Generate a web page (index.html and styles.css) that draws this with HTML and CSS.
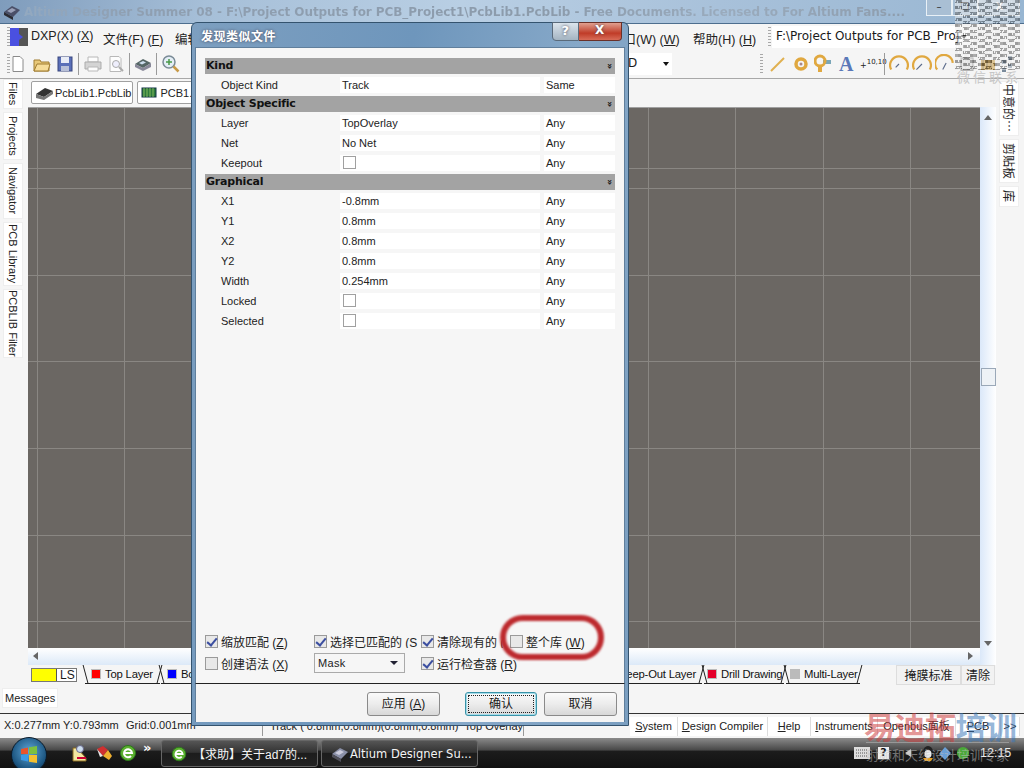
FILE: index.html
```html
<!DOCTYPE html>
<html lang="zh">
<head>
<meta charset="utf-8">
<title>Altium Designer</title>
<link rel="stylesheet" href="styles.css">
</head>
<body>
<div class="screen">
  <header class="titlebar">
    <svg class="app-icon" width="20" height="18" viewBox="0 0 20 18"><path d="M2 9 10 3l8 4-7 7z" fill="#4a4f68"/><path d="M2 9l9 5v3L2 12z" fill="#2b2b33"/><path d="M5 8l5-3 4 2-5 3z" fill="#9aa0b8"/></svg>
    <span class="title-text">Altium Designer Summer 08 - F:\Project Outputs for PCB_Project1\PcbLib1.PcbLib - Free Documents. Licensed to For Altium Fans....</span>
    <div class="win-controls"><span class="wc">&#8211;</span><span class="wc">&#10064;</span><span class="wc wc-x">X</span></div>
  </header>

  <nav class="menubar">
    <span class="grip"></span>
    <svg class="dxp" width="18" height="18" viewBox="0 0 18 18"><rect x="0" y="0" width="9" height="18" fill="#4a50e0"/><rect x="9" y="0" width="9" height="18" fill="#555"/><path d="M9 6l4 3-4 3z" fill="#4a50e0"/></svg>
    <span class="menu m-dxp">DXP(X) (<u>X</u>)</span>
    <span class="menu m-file">文件(F) (<u>F</u>)</span>
    <span class="menu m-edit">编辑</span>
    <span class="menu m-win">窗口(W) (<u>W</u>)</span>
    <span class="menu m-help">帮助(H) (<u>H</u>)</span>
    <span class="grip g-path"></span>
    <span class="path-box">F:\Project Outputs for PCB_Proj<i class="caret"></i></span>
  </nav>

  <div class="toolbar">
    <span class="grip g-tool"></span>
    <svg class="ti" width="16" height="18" viewBox="0 0 16 18"><path d="M3 1.500h7l3 3v12H3z" fill="#fff" stroke="#8a8a8a"/></svg>
    <svg class="ti t-open" width="20" height="18" viewBox="0 0 20 18"><path d="M2 5h6l1 2h8v9H2z" fill="#e8c878" stroke="#a07c30"/><path d="M2 16l3-7h13l-2 7z" fill="#f6dc98" stroke="#a07c30"/></svg>
    <svg class="ti" width="18" height="18" viewBox="0 0 18 18"><rect x="2" y="2" width="14" height="14" fill="#5a6fb8" stroke="#38467e"/><rect x="5" y="2" width="8" height="6" fill="#e8ecf6"/><rect x="5" y="11" width="8" height="5" fill="#b8c0d8"/></svg>
    <span class="sep"></span>
    <svg class="ti dim" width="20" height="18" viewBox="0 0 20 18"><path d="M5 2h10v5H5z" fill="#fff" stroke="#aaa"/><path d="M2 7h16v7H2z" fill="#ccc" stroke="#999"/><path d="M5 12h10v4H5z" fill="#fff" stroke="#aaa"/></svg>
    <svg class="ti dim" width="18" height="18" viewBox="0 0 18 18"><path d="M3 1.500h9l2 2v13H3z" fill="#fff" stroke="#aaa"/><circle cx="9" cy="9" r="3.500" fill="#eef" stroke="#999"/><path d="M12 12l4 4" stroke="#999" stroke-width="2"/></svg>
    <span class="sep"></span>
    <svg class="ti" width="18" height="18" viewBox="0 0 18 18"><path d="M1 9l8-5 8 4-8 5z" fill="#566"/><path d="M1 9v3l8 4 8-4V8l-8 5z" fill="#889"/><path d="M5 8l4-2 3 1.500-4 2z" fill="#cde"/></svg>
    <span class="sep"></span>
    <svg class="ti" width="20" height="20" viewBox="0 0 20 20"><circle cx="8" cy="8" r="6" fill="#e4eef6" stroke="#7a8a96" stroke-width="1.500"/><path d="M5 8h6M8 5v6" stroke="#4a9a4a" stroke-width="1.500"/><path d="M12.500 12.500l5 5" stroke="#c89a48" stroke-width="2.500"/></svg>
    <div class="tool-right">
      <span class="combo-d">D<i class="caret"></i></span>
      <span class="grip g-place"></span>
      <svg class="tr t-line" width="18" height="18" viewBox="0 0 18 18"><path d="M2 16 15 3" stroke="#e0b050" stroke-width="2"/></svg>
      <svg class="tr t-pad" width="16" height="18" viewBox="0 0 16 18"><circle cx="8" cy="9" r="5" fill="none" stroke="#e0a840" stroke-width="3.500"/><circle cx="8" cy="9" r="1.500" fill="#a88"/></svg>
      <svg class="tr t-via" width="18" height="20" viewBox="0 0 18 20"><path d="M9 10h8V6H9z" fill="#7aa6b8"/><circle cx="6" cy="7" r="5" fill="none" stroke="#e0a840" stroke-width="3"/><rect x="4" y="11" width="4" height="7" fill="#e0a840"/></svg>
      <span class="letter-a">A</span>
      <span class="coord">+<sup>10,10</sup></span>
      <span class="sep"></span>
      <svg class="tr arc" width="20" height="20" viewBox="1 1 18 18"><path d="M3 15A8 8 0 1 1 17 15" fill="none" stroke="#e0a840" stroke-width="2"/><path d="M7 13l3-3" stroke="#5a6a8a"/></svg>
      <svg class="tr arc" width="20" height="20" viewBox="1 1 18 18"><path d="M3 15A8 8 0 1 1 17 15" fill="none" stroke="#e0a840" stroke-width="2"/><path d="M5 15l5-5" stroke="#5a6a8a"/></svg>
      <svg class="tr arc" width="20" height="20" viewBox="1 1 18 18"><path d="M3 15A8 8 0 1 1 17 9" fill="none" stroke="#e0a840" stroke-width="2"/><path d="M8 15l3-6" stroke="#5a6a8a"/></svg>
      <svg class="tr arc" width="18" height="20" viewBox="0 0 18 20"><rect x="3" y="4" width="12" height="12" fill="#ddd" stroke="#777"/></svg>
      <svg class="tr arc" width="18" height="20" viewBox="0 0 18 20"><rect x="2" y="6" width="14" height="10" fill="#c89838"/><path d="M4 6v10M8 6v10M12 6v10" stroke="#6a5020"/></svg>
      <svg class="tr arc" width="14" height="20" viewBox="0 0 14 20"><path d="M2 6h4v4H2zM8 2h4v4H8zM8 10h4v4H8zM2 14h4v4H2z" fill="#7a8a9a"/></svg>
    </div>
  </div>

  <div class="doc-tabs">
    <span class="doc-tab">
      <svg width="20" height="16" viewBox="0 0 20 16"><path d="M1 9l9-6 8 3-9 6z" fill="#333"/><path d="M1 9v4l8 2 9-6V6l-9 6z" fill="#777"/></svg>PcbLib1.PcbLib</span>
    <span class="doc-tab">
      <svg width="19" height="14" viewBox="0 0 19 14"><rect x="1" y="2" width="14" height="9" fill="#2d7a3c" stroke="#134"/><path d="M3 2v9M6 2v9M9 2v9M12 2v9" stroke="#9c6" stroke-width=".8"/></svg>PCB1.PcbDoc</span>
  </div>

  <main class="workspace">
    <aside class="rail rail-left">
      <span class="rail-tab h-files">Files</span>
      <span class="rail-tab h-proj">Projects</span>
      <span class="rail-tab h-nav">Navigator</span>
      <span class="rail-tab h-lib">PCB Library</span>
      <span class="rail-tab h-filter">PCBLIB Filter</span>
    </aside>
    <div class="canvas-col">
      <div class="canvas"></div>
      <div class="hscroll"><i class="arr-left"></i><i class="arr-right"></i></div>
    </div>
    <div class="vscroll"><i class="arr-up"></i><b class="thumb"></b><i class="arr-down"></i></div>
    <aside class="rail rail-right">
      <span class="rail-tab cjk h-fav">中意的…</span>
      <span class="rail-tab cjk h-clip">剪贴板</span>
      <span class="rail-tab cjk h-ku">库</span>
    </aside>
  </main>

  <div class="layer-bar">
    <span class="ls"><i class="ls-swatch"></i><b>LS</b></span>
    <span class="layer w-top"><i class="sw red"></i>Top Layer</span>
    <span class="layer w-bot"><i class="sw blue"></i>Bottom Layer</span>
    <span class="layer w-keep"><i class="sw purple"></i>Keep-Out Layer</span>
    <span class="layer w-drill"><i class="sw crimson"></i>Drill Drawing</span>
    <span class="layer w-multi"><i class="sw gray"></i>Multi-Layer</span>
    <span class="layer-btn btn-mask">掩膜标准</span>
    <span class="layer-btn">清除</span>
  </div>

  <div class="messages-row"><span class="messages">Messages</span></div>

  <footer class="statusbar">
    <span class="coords">X:0.277mm Y:0.793mm</span>
    <span class="grid-val">Grid:0.001mm</span>
    <span class="track">Track ( 0.8mm,0.8mm)(0.8mm,0.8mm)  Top Overlay</span>
    <div class="panels">
      <span class="panel p-sys"><u>S</u>ystem</span>
      <span class="panel p-dc"><u>D</u>esign Compiler</span>
      <span class="panel p-help"><u>H</u>elp</span>
      <span class="panel p-ins"><u>I</u>nstruments</span>
      <span class="panel p-open">Openbus面板</span>
      <span class="panel p-pcb"><u>P</u>CB</span>
      <span class="panel p-more">&gt;&gt;</span>
    </div>
  </footer>

  <div class="taskbar">
    <span class="orb"><svg width="20" height="20" viewBox="0 0 20 20"><path d="M2 4l7-1.500V9H2z" fill="#e8542c"/><path d="M10 2.300 18 1v8h-8z" fill="#7cc040"/><path d="M2 10h7v6.500L2 15z" fill="#3a9ae8"/><path d="M10 10h8v8l-8-1.300z" fill="#f4c030"/></svg></span>
    <div class="quick">
      <svg width="20" height="20" viewBox="0 0 20 20"><path d="M3 18V5h4l9 10v3z" fill="#f4e8a0" stroke="#8a6a20"/><circle cx="10" cy="6" r="3.500" fill="#cde" stroke="#668"/><path d="M7 15h9" stroke="#c03"  stroke-width="2"/></svg>
      <svg width="20" height="20" viewBox="0 0 20 20"><path d="M3 6l6-3 5 4-5 6z" fill="#d03030"/><path d="M9 13l5-6 4 6-3 4z" fill="#f0b030"/><path d="M3 6l6 7-3 1z" fill="#e8e8e8"/></svg>
      <svg width="20" height="20" viewBox="0 0 20 20"><circle cx="10" cy="10" r="7.500" fill="#5cb030" stroke="#2a7a18"/><path d="M6 10h8a4 4 0 1 0-1 3" fill="none" stroke="#fff" stroke-width="2"/></svg>
    </div>
    <span class="chev">&raquo;</span>
    <span class="task t1">
      <svg width="18" height="18" viewBox="0 0 20 20"><circle cx="10" cy="10" r="7.500" fill="#5cb030" stroke="#2a7a18"/><path d="M6 10h8a4 4 0 1 0-1 3" fill="none" stroke="#fff" stroke-width="2"/></svg>【求助】关于ad7的...</span>
    <span class="task t2">
      <svg width="20" height="18" viewBox="0 0 20 18"><path d="M2 9 10 3l8 4-7 7z" fill="#8a90a8"/><path d="M2 9l9 5v3L2 12z" fill="#50505a"/><path d="M5 8l5-3 4 2-5 3z" fill="#ccd"/></svg>Altium Designer Su...</span>
    <div class="tray">
      <svg class="tk" width="16" height="12" viewBox="0 0 16 12"><rect width="16" height="12" fill="#ddd"/><path d="M2 3h12M2 6h12M2 9h12" stroke="#555" stroke-dasharray="1 1"/></svg>
      <span class="tray-help">?</span>
      <span class="tray-arrow"></span>
      <svg class="tq" width="16" height="18" viewBox="0 0 16 18"><ellipse cx="8" cy="8" rx="5" ry="6" fill="#222"/><ellipse cx="8" cy="10" rx="3.500" ry="4" fill="#eee"/><path d="M3 14h10l-2 3H5z" fill="#e8a020"/></svg>
      <svg class="tn" width="16" height="16" viewBox="0 0 16 16"><path d="M2 9l6-7 6 6-6 7z" fill="#6aa0d8"/></svg>
      <svg class="tg" width="14" height="14" viewBox="0 0 16 16"><circle cx="8" cy="8" r="7" fill="#4aa838"/></svg>
      <span class="clock">12:15</span>
    </div>
  </div>

  <section class="dialog">
    <div class="dlg-title">
      <span>发现类似文件</span>
      <div class="dlg-controls"><span class="dc-help">?</span><span class="dc-close">X</span></div>
    </div>
    <div class="dlg-body">
      <div class="dlg-content">
        <div class="grp-head">Kind<i>&#187;</i></div>
        <div class="row"><span>Object Kind</span><span class="val">Track</span><span class="scope">Same</span></div>
        <div class="grp-head">Object Specific<i>&#187;</i></div>
        <div class="row"><span>Layer</span><span class="val">TopOverlay</span><span class="scope">Any</span></div>
        <div class="row"><span>Net</span><span class="val">No Net</span><span class="scope">Any</span></div>
        <div class="row"><span>Keepout</span><span class="val"><i class="box-sm"></i></span><span class="scope">Any</span></div>
        <div class="grp-head">Graphical<i>&#187;</i></div>
        <div class="row"><span>X1</span><span class="val">-0.8mm</span><span class="scope">Any</span></div>
        <div class="row"><span>Y1</span><span class="val">0.8mm</span><span class="scope">Any</span></div>
        <div class="row"><span>X2</span><span class="val">0.8mm</span><span class="scope">Any</span></div>
        <div class="row"><span>Y2</span><span class="val">0.8mm</span><span class="scope">Any</span></div>
        <div class="row"><span>Width</span><span class="val">0.254mm</span><span class="scope">Any</span></div>
        <div class="row"><span>Locked</span><span class="val"><i class="box-sm"></i></span><span class="scope">Any</span></div>
        <div class="row"><span>Selected</span><span class="val"><i class="box-sm"></i></span><span class="scope">Any</span></div>
      </div>
      <div class="options">
        <label class="opt"><i class="cb on"></i><span>缩放匹配 (<u>Z</u>)</span></label>
        <label class="opt clip"><i class="cb on"></i><span>选择已匹配的 (<u>S</u></span></label>
        <label class="opt clip"><i class="cb on"></i><span>清除现有的 (</span></label>
        <label class="opt"><i class="cb"></i><span>整个库 (<u>W</u>)</span></label>
        <label class="opt"><i class="cb"></i><span>创建语法 (<u>X</u>)</span></label>
        <span class="mask">Mask<i class="caret"></i></span>
        <label class="opt"><i class="cb on"></i><span>运行检查器 (<u>R</u>)</span></label>
      </div>
    </div>
    <div class="dlg-foot">
      <span class="btn b-apply">应用 (<u>A</u>)</span>
      <span class="btn b-ok"><em>确认</em></span>
      <span class="btn b-cancel">取消</span>
    </div>
  </section>

  <div class="ring"></div>

  <div class="qr"></div>
  <span class="qr-cap">微信联系</span>
  <div class="mark"><span class="mark-red">易迪拓</span><span class="mark-blue">培训</span></div>
  <span class="mark-sub">射频和天线设计培训专家</span>
</div>
</body>
</html>
```
FILE: styles.css
```css
* { box-sizing: border-box; }
html, body { margin: 0; padding: 0; background: #f5f5f5; }
i, em { font-style: normal; }
.screen {
  position: relative; width: 1024px; height: 768px; overflow: hidden;
  display: flex; flex-direction: column; background: #f5f5f5; color: #1a1a1a;
  font-family: "DejaVu Sans", "Noto Sans CJK SC", sans-serif; font-size: 11px;
}
.caret { display: inline-block; width: 0; height: 0; border: 3.500px solid transparent; border-top: 4px solid #111; border-bottom: 0; }

/* window title */
.titlebar {
  height: 24px; flex: none; display: flex; align-items: center; padding-left: 2px;
  background: linear-gradient(100deg, #7f9cbc 0, #a6bfd8 20%, #b9cfe4 45%, #a8c1da 70%, #98b6d2 100%);
  border-bottom: 1px solid #4d6e8e;
}
.title-text {
  margin-left: 2px; font: bold 12px "DejaVu Sans", sans-serif; letter-spacing: -.06px; white-space: nowrap;
  background: linear-gradient(90deg, #93a9c0 0, #8f9fb1 12%, #8c9bab 60%, #9aabbd 80%, #8d9cac 100%);
  -webkit-background-clip: text; background-clip: text; color: transparent;
}
.win-controls { position: absolute; right: 4px; top: 0; display: flex; height: 16px; }
.wc { width: 26px; height: 16px; border: 1px solid #e8f0f6; border-top: 0; text-align: center; color: #333; font-size: 10px; line-height: 14px; background: #a9bfd4; }
.wc-x { width: 42px; color: #fff; font-weight: bold; background: #b4c8da; }

/* menu */
.menubar { height: 26px; flex: none; position: relative; display: flex; align-items: center; padding-left: 7px; }
.grip { width: 3px; height: 20px; flex: none; background: repeating-linear-gradient(#a8a8a8 0 1px, transparent 1px 3px); }
.dxp { position: absolute; left: 10px; top: 4px; }
.menu { position: absolute; top: 5px; font: 12.500px "Liberation Sans", "Noto Sans CJK SC", sans-serif; color: #222; white-space: nowrap; }
.m-dxp { left: 31px; }
.m-file { left: 103px; }
.m-edit { left: 175px; }
.m-win { left: 611px; }
.m-help { left: 693px; }
.g-path { position: absolute; left: 768px; top: 3px; }
.path-box { position: absolute; left: 772px; top: 2px; width: 198px; height: 22px; background: #fff; padding: 3px 0 0 4px; font-size: 12px; white-space: nowrap; }
.path-box .caret { position: absolute; right: 3px; top: 9px; }

/* toolbar */
.toolbar { height: 29px; flex: none; display: flex; align-items: center; gap: 4px; padding-left: 7px; border-bottom: 1px solid #a8a8a8; position: relative; }
.g-tool { margin-right: -4px; }
.ti { flex: none; }
.t-open { margin-left: 2px; }
.ti.dim { opacity: .8; }
.sep { width: 1px; height: 22px; background: #9a9a9a; flex: none; }
.tool-right { position: absolute; left: 628px; top: 3px; right: 0; display: flex; align-items: center; height: 22px; }
.combo-d { width: 44px; height: 22px; background: #fff; font-size: 12px; padding: 3px 0 0 0; position: relative; }
.combo-d .caret { position: absolute; right: 3px; top: 9px; }
.g-place { margin-left: 88px; }
.tr { flex: none; }
.t-line { margin-left: 6px; }
.t-pad { margin-left: 6px; }
.t-via { margin-left: 5px; }
.letter-a { font: bold 20px "Liberation Serif", serif; color: #5a78b8; margin-left: 7px; width: 17px; }
.coord { font-size: 8px; margin-left: 4px; width: 22px; white-space: nowrap; color: #222; }
.coord sup { font-size: 7px; }
.tool-right .sep { margin-left: 2px; margin-right: 1px; }
.tool-right .arc { margin-left: 3px; }

/* document tabs */
.doc-tabs { height: 28px; flex: none; display: flex; gap: 4px; padding: 2px 0 0 31px; }
.doc-tab { height: 23px; display: flex; align-items: center; padding: 0 1px 0 3px; background: #fff; border: 1px solid #a0a0a0; border-radius: 2px; font: 11px "Liberation Sans", sans-serif; color: #222; white-space: nowrap; }

/* workspace */
.workspace { height: 558px; flex: none; display: grid; grid-template-columns: 28px 952px 16px 28px; }
.rail { display: flex; flex-direction: column; gap: 3px; }
.rail-left { padding: 0 0 0 3px; margin-top: -28px; position: relative; }
.rail-left .rail-tab { width: 20px; }
.rail-right { padding: 0 0 0 3px; margin-top: -26px; }
.rail-right .rail-tab { width: 20px; }
.rail-tab { display: flex; align-items: center; justify-content: center; background: #fff; border: 1px solid #eee; writing-mode: vertical-rl; font: 11px "Liberation Sans", sans-serif; color: #222; white-space: nowrap; }
.rail-tab.cjk { font: 12px "Noto Sans CJK SC", sans-serif; text-orientation: sideways; }
.h-files { height: 30px; }
.h-proj { height: 48px; }
.h-nav { height: 56px; }
.h-lib { height: 64px; }
.h-filter { height: 69px; }
.h-fav { height: 55px; }
.h-clip { height: 44px; }
.h-ku { height: 21px; }
.canvas-col { display: flex; flex-direction: column; }
.canvas {
  flex: 1; background-color: #6b6763;
  background-image:
    repeating-linear-gradient(90deg, #8a8783 0 1px, transparent 1px 87.300px),
    repeating-linear-gradient(180deg, #8a8783 0 1px, transparent 1px 86.700px);
  background-position: 9px 0, 0 80px;
  border-top: 1px solid #a0a0a0;
}
.hscroll { height: 17px; flex: none; position: relative; background: linear-gradient(#ffffff, #dce9f8); }
.arr-left { position: absolute; left: 5px; top: 4px; border: 4px solid transparent; border-right: 5px solid #666; border-left: 0; }
.arr-right { position: absolute; right: 7px; top: 4px; border: 4px solid transparent; border-left: 5px solid #666; border-right: 0; }
.vscroll { position: relative; background: linear-gradient(90deg, #dbe8f9, #ffffff); }
.arr-up { position: absolute; left: 4px; top: 8px; border: 4px solid transparent; border-bottom: 5px solid #666; border-top: 0; }
.arr-down { position: absolute; left: 4px; bottom: 19px; border: 4px solid transparent; border-top: 5px solid #666; border-bottom: 0; }
.thumb { position: absolute; left: 1px; top: 261px; width: 15px; height: 18px; background: #eef2f6; border: 1px solid #9aa8b8; }

/* layer bar */
.layer-bar { height: 23px; flex: none; position: relative; display: flex; align-items: flex-start; padding: 0 0 0 31px; }
.ls { width: 46px; height: 14px; margin-top: 3px; display: flex; border: 1px solid #777; font: 12px "Liberation Sans", sans-serif; line-height: 13px; background: #fff; flex: none; }
.ls-swatch { width: 25px; background: #ffff00; border-right: 1px solid #555; }
.ls b { font-weight: normal; padding-left: 3px; }
.layer {
  height: 19px; flex: none; display: flex; align-items: center; gap: 4px; padding-left: 6px;
  font: 11.300px "Liberation Sans", sans-serif; letter-spacing: -.2px; color: #111; white-space: nowrap; position: relative;
  border-bottom: 1px solid #222;
}
.layer::before, .layer::after { content: ""; position: absolute; top: 0; height: 18px; width: 1px; background: #222; }
.layer::before { left: 0; transform: skewX(15deg); }
.layer::after { right: 0; transform: skewX(-15deg); }
.w-top { width: 75px; margin-left: 8px; }
.w-bot { width: 80px; margin-left: 1px; }
.w-keep { width: 460px; margin-left: 1px; padding-left: 363px; }
.w-drill { width: 80px; margin-left: 2px; padding-left: 3px; }
.w-multi { width: 74px; margin-left: 2px; padding-left: 4px; }
.sw { width: 10px; height: 10px; border: 1px solid #bbb; flex: none; }
.sw.red { background: #f00; }
.sw.blue { background: #00f; }
.sw.purple { background: #808; }
.sw.crimson { background: #e4002b; }
.sw.gray { background: #bbb; }
.layer-btn { height: 20px; background: #f2f2f2; border: 1px solid #ddd; font: 12px "Noto Sans CJK SC", sans-serif; line-height: 18px; padding: 0 4px; }
.btn-mask { margin-left: 36px; width: 65px; text-align: center; }

.messages-row { height: 25px; flex: none; padding: 0 0 0 2px; }
.messages { display: inline-block; width: 56px; height: 20px; background: #fff; border: 1px solid #eee; font: 11px "Liberation Sans", sans-serif; line-height: 18px; padding-left: 2px; color: #222; }

/* status */
.statusbar { height: 25px; flex: none; position: relative; border-top: 1px solid #333; font: 11px "Liberation Sans", "Noto Sans CJK SC", sans-serif; color: #222; }
.coords { position: absolute; left: 4px; top: 5px; white-space: nowrap; }
.grid-val { position: absolute; left: 126px; top: 5px; white-space: nowrap; }
.track { position: absolute; left: 270px; top: 6px; white-space: pre; }
.track::before { content: ""; position: absolute; left: -8px; top: -4px; height: 20px; width: 1px; background: #999; }
.track::after { content: ""; position: absolute; left: 253px; top: -4px; height: 20px; width: 1px; background: #999; }
.panels { position: absolute; left: 630px; top: 3px; display: flex; height: 19px; }
.panel { background: #fff; border-right: 1px solid #ddd; line-height: 18px; text-align: center; white-space: nowrap; }
.p-sys { width: 48px; }
.p-dc { width: 90px; }
.p-help { width: 43px; }
.p-ins { width: 67px; }
.p-open { width: 78px; }
.p-pcb { width: 45px; }
.p-more { width: 19px; }

/* taskbar */
.taskbar { height: 30px; flex: none; position: relative; display: flex; align-items: center; background: linear-gradient(#8a8a8a 0, #484848 40%, #1c1c1c 44%, #111 100%); color: #fff; }
.orb { position: absolute; left: 11px; top: -1px; width: 36px; height: 36px; border-radius: 50%; background: radial-gradient(circle at 50% 40%, #5fa6d8, #1c5580 65%, #0c1a28); border: 1px solid #0a1a2a; display: flex; align-items: center; justify-content: center; }
.quick { position: absolute; left: 70px; top: 5px; display: flex; gap: 4px; }
.chev { position: absolute; left: 143px; top: 2px; font: bold 13px "DejaVu Sans", sans-serif; }
.task { position: absolute; top: 2px; height: 27px; display: flex; align-items: center; gap: 5px; padding-left: 8px; border: 1px solid #666; border-radius: 3px; background: linear-gradient(#555 0, #333 45%, #1c1c1c 50%, #222 100%); font: 12px "Liberation Sans", "Noto Sans CJK SC", sans-serif; white-space: nowrap; color: #f4f4f4; }
.t1 { left: 161px; width: 157px; }
.t2 { left: 321px; width: 157px; gap: 0; font: 11.500px "DejaVu Sans", sans-serif; }
.tray { position: absolute; left: 854px; top: 4px; display: flex; align-items: center; height: 22px; }
.tray-help { width: 13px; height: 14px; margin-left: 7px; background: #eee; border: 1px solid #555; color: #111; font: bold 11px "DejaVu Sans", sans-serif; text-align: center; line-height: 12px; }
.tray-arrow { width: 0; height: 0; margin-left: 15px; border-top: 4px solid transparent; border-bottom: 4px solid transparent; border-right: 6px solid #ccc; margin-right: 4px; }
.tq { margin-left: 5px; }
.tn { margin-left: 1px; }
.tg { margin-left: 3px; }
.clock { font: 12.500px "Liberation Sans", sans-serif; margin-left: 10px; color: #eee; }

/* dialog */
.dialog {
  position: absolute; left: 191px; top: 22px; width: 438px; height: 704px; display: flex; flex-direction: column;
  border: 1px solid #34536e; border-radius: 6px 6px 0 0; background: linear-gradient(100deg, #7d9fc0, #6e96bc 40%, #86a8c8 70%, #7a9ec0);
  padding: 0 3px 3px;
}
.dlg-title { height: 24px; flex: none; display: flex; align-items: center; padding-left: 6px; color: #fff; font: bold 12px "Noto Sans CJK SC", sans-serif; text-shadow: 0 0 3px #445; letter-spacing: .5px; position: relative; }
.dlg-controls { position: absolute; right: 3px; top: -1px; display: flex; height: 19px; }
.dc-help { width: 27px; background: linear-gradient(#dbe4ec, #a4b4c2); border: 1px solid #5a6a7a; border-radius: 0 0 0 4px; color: #fff; text-align: center; line-height: 17px; font: bold 13px "DejaVu Sans", sans-serif; }
.dc-close { width: 43px; background: linear-gradient(#e0a090, #c03c28 60%, #d86c58); border: 1px solid #6a3028; border-left: 0; border-radius: 0 0 4px 0; color: #fff; text-align: center; line-height: 17px; font: bold 12px "DejaVu Sans", sans-serif; }
.dlg-body { flex: 1; background: #f6f6f6; position: relative; display: flex; flex-direction: column; justify-content: space-between; padding: 10px 9px 0 9px; border: 1px solid #607f9c; border-bottom: 0; }
.dlg-content { display: flex; flex-direction: column; }
.grp-head { height: 16px; margin-bottom: 3px; background: #a3a3a3; font: bold 11px "DejaVu Sans", sans-serif; letter-spacing: -.2px; padding-left: 1px; line-height: 15px; display: flex; justify-content: space-between; color: #111; }
.row + .grp-head { margin-top: -1px; }
.grp-head i { font-size: 9px; transform: rotate(90deg); width: 10px; text-align: center; margin-right: 1px; }
.row { height: 20px; display: grid; grid-template-columns: 135px 200px 75px; font: 11px "Liberation Sans", sans-serif; color: #222; }
.row span { height: 16px; line-height: 16px; }
.row span:first-child { padding-left: 16px; }
.val, .scope { background: #fff; padding-left: 2px; }
.row .scope { margin-left: 4px; }
.box-sm { display: block; width: 13px; height: 13px; border: 1px solid #a0a0a0; background: #fff; margin: 1px 0 0 1px; }
.options { display: grid; grid-template-columns: 109px 107px 89px 105px; row-gap: 8px; margin-bottom: 10px; font: 12px "Liberation Sans", "Noto Sans CJK SC", sans-serif; color: #222; }
.opt { display: flex; align-items: center; gap: 3px; white-space: nowrap; height: 14px; }
.opt.clip { overflow: hidden; margin-right: 2px; }
.cb { width: 13px; height: 13px; flex: none; border: 1px solid #9a9a9a; background: #e8e8e8; position: relative; }
.cb.on::after { content: ""; position: absolute; left: 3px; top: 0; width: 4px; height: 8px; border: solid #3b4ea0; border-width: 0 2px 2px 0; transform: rotate(40deg); }
.mask { width: 91px; height: 20px; margin-top: -3px; border: 1px solid #aaa; background: #f6f6f6; font: 11px "Liberation Sans", sans-serif; letter-spacing: .3px; line-height: 18px; padding-left: 3px; position: relative; }
.mask .caret { position: absolute; right: 6px; top: 7px; border-width: 4px; border-top-width: 4px; border-bottom: 0; border-top-color: #223; }
.dlg-foot { height: 39px; flex: none; background: #f4f4f4; border-top: 1px solid #222; display: flex; align-items: flex-start; padding: 8px 0 0 171px; border-left: 1px solid #607f9c; border-right: 1px solid #607f9c; }
.btn { height: 24px; border: 1px solid #8a8a8a; border-radius: 3px; background: linear-gradient(#fafafa, #ececec 50%, #d8d8d8); font: 12px "Liberation Sans", "Noto Sans CJK SC", sans-serif; line-height: 22px; text-align: center; }
.b-apply { width: 73px; }
.b-ok { width: 72px; margin-left: 25px; border: 1px solid #3a93a8; box-shadow: inset 0 0 0 1px #a4dcea; padding: 2px; line-height: 16px; }
.b-ok em { display: block; height: 18px; border: 1px dotted #222; }
.b-cancel { width: 73px; margin-left: 7px; }

/* overlays */
.ring { position: absolute; left: 500px; top: 615px; width: 104px; height: 45px; border: 6px solid #bd2a2e; border-radius: 23px; filter: blur(1px); }
.qr {
  position: absolute; left: 955px; top: 0; width: 65px; height: 70px; opacity: .5;
  background-color: rgba(235,235,235,.75);
  background-image:
    repeating-conic-gradient(rgba(255,255,255,.9) 0 25%, transparent 0 50%),
    repeating-conic-gradient(#444 0 25%, transparent 0 50%),
    repeating-conic-gradient(#666 0 25%, transparent 0 50%),
    repeating-conic-gradient(#555 0 25%, transparent 0 50%);
  background-size: 15px 6px, 6px 9px, 9px 15px, 3px 3px;
}
.qr-cap { position: absolute; left: 957px; top: 69px; font: 13px "Noto Sans CJK SC", sans-serif; letter-spacing: 3px; color: #c6c6c6; line-height: 16px; white-space: nowrap; }
.mark { position: absolute; left: 864px; top: 708px; font: bold 31px "Noto Sans CJK SC", sans-serif; line-height: 36px; letter-spacing: -.5px; white-space: nowrap; }
.mark-red { color: rgba(205,60,60,.55); }
.mark-blue { color: rgba(60,120,185,.55); }
.mark-sub { position: absolute; left: 866px; top: 742px; padding-top: 2px; border-top: 1px solid rgba(190,190,190,.5); font: 13px "Noto Sans CJK SC", sans-serif; color: rgba(190,190,190,.55); white-space: nowrap; }
```
